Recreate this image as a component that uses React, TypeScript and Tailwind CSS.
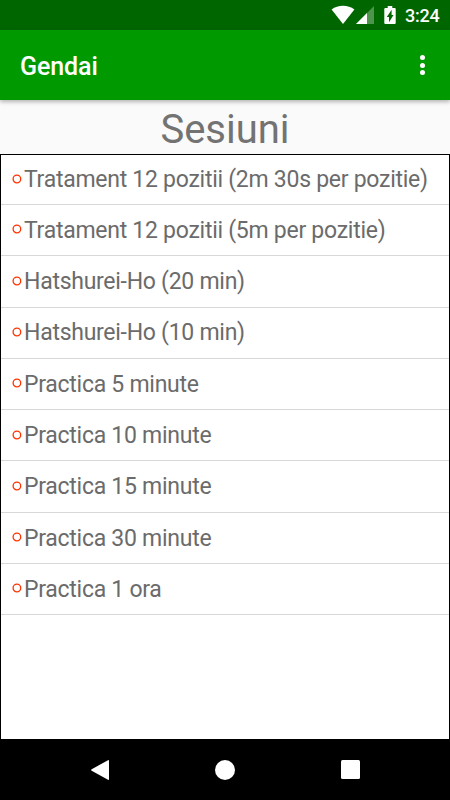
const sessions = [
  'Tratament 12 pozitii (2m 30s per pozitie)',
  'Tratament 12 pozitii (5m per pozitie)',
  'Hatshurei-Ho (20 min)',
  'Hatshurei-Ho (10 min)',
  'Practica 5 minute',
  'Practica 10 minute',
  'Practica 15 minute',
  'Practica 30 minute',
  'Practica 1 ora',
]

function StatusBar() {
  return (
    <div className="flex h-[30px] shrink-0 items-center justify-end bg-[#006600] pr-[10px] text-white">
      <svg width="24" height="20" viewBox="0 0 24 20" fill="currentColor" aria-hidden="true">
        <path d="M12 19 L0.6 4.6 C4 2 7.7 0.8 12 0.8 S20 2 23.4 4.6 Z" />
      </svg>
      <svg className="ml-px" width="19" height="20" viewBox="0 0 19 20" fill="currentColor" aria-hidden="true">
        <path d="M18 1 V19 H0 Z" opacity="0.3" />
        <path d="M11 8 V19 H0 Z" />
      </svg>
      <svg className="ml-[9px]" width="12" height="20" viewBox="0 0 12 20" fill="currentColor" aria-hidden="true">
        <path
          fillRule="evenodd"
          d="M3.7 1 H8.3 V2.9 H10.7 Q11.7 2.9 11.7 3.9 V18 Q11.7 19 10.7 19 H1.3 Q0.3 19 0.3 18 V3.9 Q0.3 2.9 1.3 2.9 H3.7 Z M7.6 4.8 L2.8 11.9 H5 V17.2 L9.5 10.1 H7.6 Z"
        />
      </svg>
      <span className="ml-[9px] w-[35px] pt-[2px] text-[18px] leading-[28px] font-medium tracking-[-0.25px]">3:24</span>
    </div>
  )
}

function AppBar() {
  return (
    <header className="relative flex h-[70px] shrink-0 items-center justify-between bg-[#009900] pr-[25px] pl-5 text-white shadow-[0_2px_4px_rgba(0,0,0,0.28)]">
      <h1 className="pt-[3px] text-[25px] leading-8 font-medium tracking-[-0.1px]">Gendai</h1>
      <button className="flex flex-col gap-[2.5px]" aria-label="Menu">
        <span className="size-[5px] rounded-full bg-white" />
        <span className="size-[5px] rounded-full bg-white" />
        <span className="size-[5px] rounded-full bg-white" />
      </button>
    </header>
  )
}

function NavBar() {
  return (
    <nav className="flex h-[61px] shrink-0 items-center justify-between bg-black pr-[90.5px] pl-[90px] text-white">
      <svg width="20" height="22" viewBox="0 0 20 22" fill="currentColor" aria-hidden="true">
        <path d="M18 1.2 Q19 0.7 19 1.8 V20.2 Q19 21.3 18 20.8 L1.7 11.8 Q0.5 11 1.7 10.2 Z" />
      </svg>
      <span className="-ml-px size-5 rounded-full bg-white" />
      <span className="size-[19px] rounded-[1.5px] bg-white" />
    </nav>
  )
}

export default function App() {
  return (
    <div className="flex h-[800px] w-[450px] flex-col overflow-hidden bg-[#fafafa] font-['Roboto',sans-serif]">
      <StatusBar />
      <AppBar />
      <h2 className="h-[54px] shrink-0 text-center text-[40px] leading-[60px] text-[#737373]">Sesiuni</h2>
      <ul className="min-h-0 flex-1 border-x border-t border-black bg-white">
        {sessions.map((name) => (
          <li
            key={name}
            className="flex h-[51.3px] items-center border-b border-[#d8d8d8] pl-[11px] text-[23px] tracking-[-0.27px] whitespace-nowrap text-[#6b6b6b] first:h-[50px]"
          >
            <svg className="mr-[2px] mb-[1.5px] shrink-0" width="10" height="10" viewBox="0 0 10 10" fill="none" aria-hidden="true">
              <circle cx="4.9" cy="5" r="3.8" stroke="#ff3300" strokeWidth="1.3" />
            </svg>
            <span className="pt-[2px]">{name}</span>
          </li>
        ))}
      </ul>
      <NavBar />
    </div>
  )
}
